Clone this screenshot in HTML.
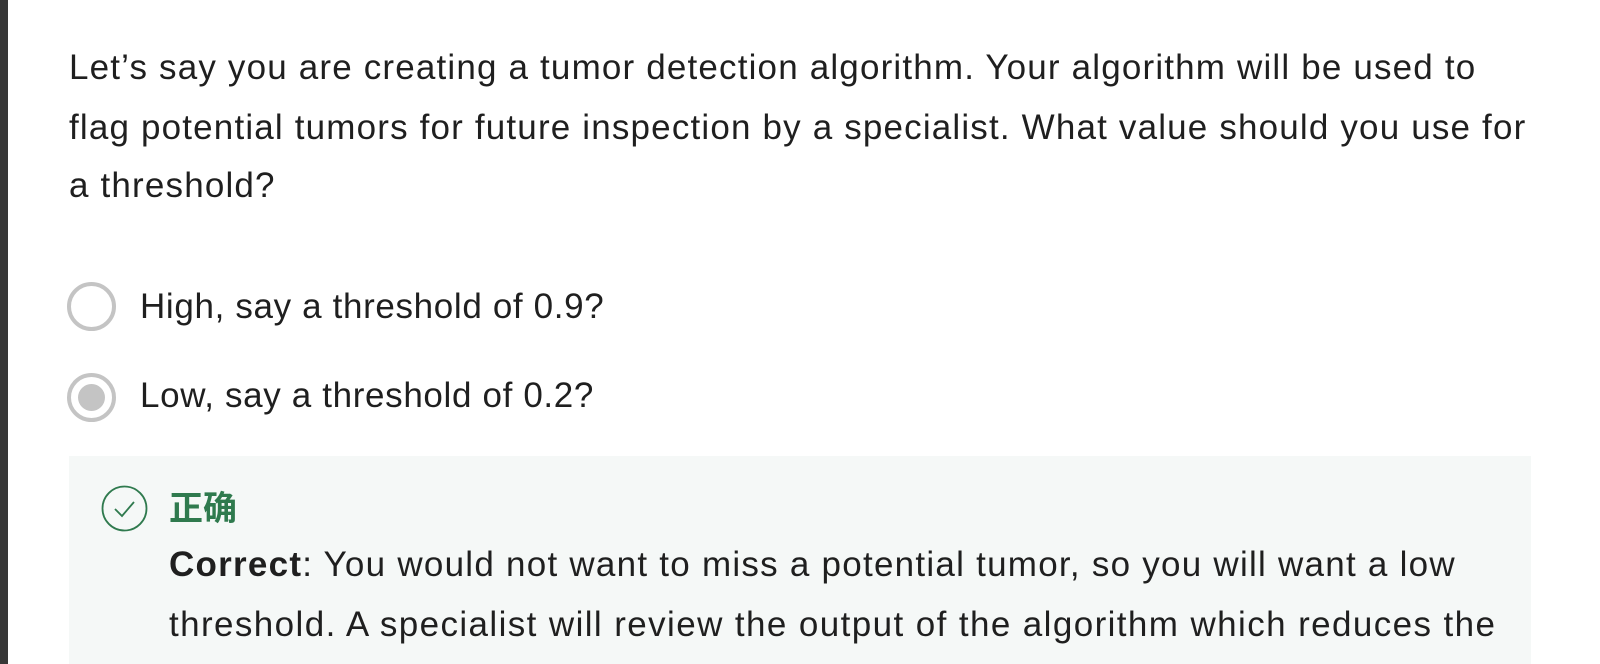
<!DOCTYPE html>
<html><head><meta charset="utf-8"><style>
html,body{margin:0;padding:0;width:1600px;height:664px;overflow:hidden;background:#fff;}
body{font-family:"Liberation Sans","Noto Sans CJK SC",sans-serif;color:#1f1f1f;position:relative;}
.bar{position:absolute;left:0;top:0;width:8px;height:664px;background:#373737;}
.l{position:absolute;left:69px;white-space:nowrap;font-size:35px;letter-spacing:1.17px;line-height:44px;}
.radio{position:absolute;left:67px;width:41px;height:41px;border:4px solid #c4c4c4;border-radius:50%;}
.dot{position:absolute;left:7px;top:7px;width:27px;height:27px;border-radius:50%;background:#c4c4c4;}
.fb{position:absolute;left:69px;top:456px;width:1462px;height:230px;background:#f5f8f7;}
.chk{position:absolute;left:101px;top:485px;}
.green{position:absolute;left:169px;top:486px;font-size:34px;font-weight:bold;color:#2f7a4e;line-height:46px;}
</style></head><body>
<div class="bar"></div>
<div class="l" style="top:46px">Let’s say you are creating a tumor detection algorithm. Your algorithm will be used to</div>
<div class="l" style="top:106px">flag potential tumors for future inspection by a specialist. What value should you use for</div>
<div class="l" style="top:164px">a threshold?</div>
<div class="radio" style="top:282px"></div>
<div class="l" style="left:140px;top:285px;letter-spacing:0.65px">High, say a threshold of 0.9?</div>
<div class="radio" style="top:373px"><div class="dot"></div></div>
<div class="l" style="left:140px;top:374px;letter-spacing:0.65px">Low, say a threshold of 0.2?</div>
<div class="fb"></div>
<svg class="chk" width="47" height="47" viewBox="0 0 47 47"><circle cx="23.5" cy="23.5" r="22" fill="none" stroke="#2f7a4e" stroke-width="1.8"/><path d="M14 24 L21 31 L33 17" fill="none" stroke="#2f7a4e" stroke-width="1.8"/></svg>
<div class="green">正确</div>
<div class="l" style="left:169px;top:543px;letter-spacing:1.25px"><b>Correct</b>: You would not want to miss a potential tumor, so you will want a low</div>
<div class="l" style="left:169px;top:603px;letter-spacing:1.4px">threshold. A specialist will review the output of the algorithm which reduces the</div>
</body></html>
